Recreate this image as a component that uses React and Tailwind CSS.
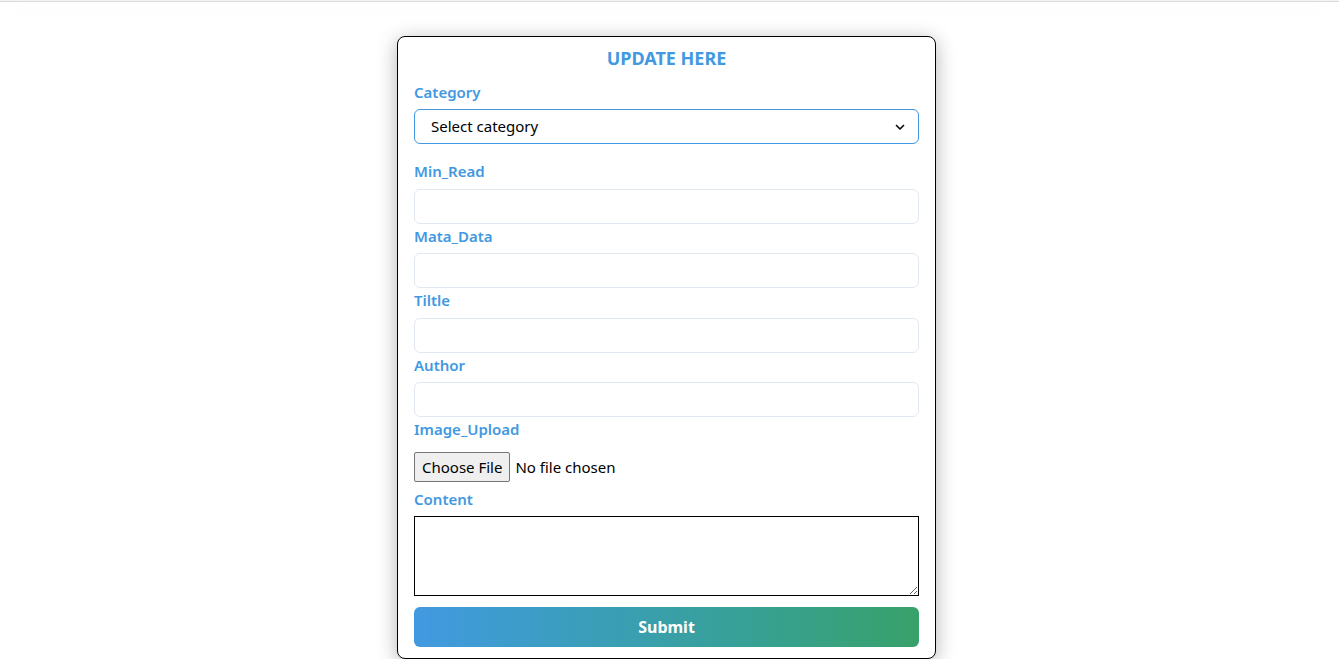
import React from 'react';

const font = { fontFamily: '"Noto Sans", "Open Sans", Arial, sans-serif' };

function Label({ children, className = '' }) {
  return (
    <label className={`block h-6 leading-6 text-[15px] font-semibold text-[#4299e1] ${className}`}>
      {children}
    </label>
  );
}

function TextInput() {
  return (
    <input
      type="text"
      className="block w-full h-[35px] rounded-md border border-[#e2e8f0] bg-white px-3 outline-none"
    />
  );
}

export default function App() {
  return (
    <div className="min-h-screen bg-white text-black" style={font}>
      {/* navbar, scrolled mostly out of view */}
      <div className="h-[2px] bg-[#f3f3f3] border-b border-[#dcdcdc] shadow-[0_8px_22px_rgba(0,0,0,0.06)]" />

      <div className="flex justify-center pt-[34px] pr-[6px]">
        <form className="w-[539px] rounded-lg border border-black bg-white px-4 pt-[7px] pb-[11px] shadow-[0_4px_20px_rgba(0,0,0,0.3)]">
          <h2 className="h-7 leading-7 text-center text-[18px] font-bold text-[#4299e1]">UPDATE HERE</h2>

          <Label className="mt-2 mb-[5px]">Category</Label>
          <div className="flex h-[35px] items-center justify-between rounded-md border border-[#4299e1] pl-4 pr-3 text-[15px]">
            <span>Select category</span>
            <svg width="12" height="12" viewBox="0 0 24 24" fill="none" stroke="#111" strokeWidth="3.5" strokeLinecap="round" strokeLinejoin="round">
              <path d="M5 9l7 7 7-7" />
            </svg>
          </div>

          <Label className="mt-[15px] mb-[6px]">Min_Read</Label>
          <TextInput />

          <Label className="mb-[5px]">Mata_Data</Label>
          <TextInput />

          <Label className="mb-[6px]">Tiltle</Label>
          <TextInput />

          <Label className="mb-[5px]">Author</Label>
          <TextInput />

          <Label className="mb-[11px]">Image_Upload</Label>
          <div className="flex h-[30px] items-center">
            <button type="button" className="h-[30px] rounded-[2px] border border-[#767676] bg-[#efefef] px-[7px] text-[15px] leading-none">
              Choose File
            </button>
            <span className="ml-[5px] text-[15px]">No file chosen</span>
          </div>

          <Label className="mt-[5px] mb-[5px]">Content</Label>
          <textarea className="block w-full h-[80px] border border-black bg-white outline-none" />

          <button
            type="button"
            className="mt-[11px] block w-full h-10 rounded-md bg-gradient-to-r from-[#4299e1] to-[#38a169] text-[16px] font-bold text-white"
          >
            Submit
          </button>
        </form>
      </div>
    </div>
  );
}
